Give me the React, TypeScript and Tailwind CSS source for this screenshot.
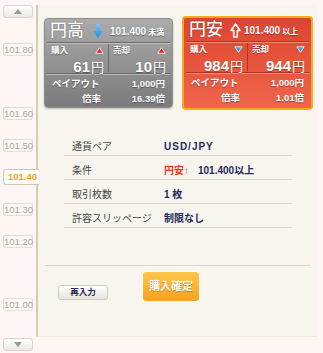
const font = "font-['Liberation_Sans','Noto_Sans_CJK_JP',sans-serif]";

const ScaleBox = ({ label, className }: { label: string; className?: string }) => (
  <div
    className={`h-[13px] w-[30px] rounded-[2px] border border-[#e3ddd6] bg-[#fcf9f6] text-[9.5px] leading-[11px] text-[#a9a6a2] text-center ${className ?? ''}`}>
    {label}
  </div>
);

const ArrowBtn = ({ up, className }: { up?: boolean; className?: string }) => (
  <div
    className={`h-[13px] w-[30px] rounded-[3px] border border-[#d8d4ce] bg-gradient-to-b from-white to-[#ece9e4] flex items-center justify-center ${className ?? ''}`}>
    <svg width="8" height="5" viewBox="0 0 8 5">
      <path d={up ? 'M0 5 L4 0 L8 5 Z' : 'M0 0 L4 5 L8 0 Z'} fill="#9a9894" />
    </svg>
  </div>
);

const Tri = ({ up }: { up?: boolean }) => (
  <svg width="9" height="7" viewBox="0 0 9 7">
    <path
      d={up ? 'M0.8 6.3 L4.5 0.8 L8.2 6.3 Z' : 'M0.8 0.8 L4.5 6.3 L8.2 0.8 Z'}
      fill={up ? '#e3261f' : '#2ea3ea'}
      stroke="#ffffff"
      strokeWidth="0.8"
      strokeLinejoin="round"
    />
  </svg>
);

const DownArrow = () => (
  <svg width="10" height="14" viewBox="0 0 10 14">
    <defs>
      <linearGradient id="bl" x1="0" y1="0" x2="0" y2="1">
        <stop offset="0" stopColor="#7cc8f7" />
        <stop offset="1" stopColor="#1a8fe0" />
      </linearGradient>
    </defs>
    <path d="M3 0 H7 V7 H10 L5 14 L0 7 H3 Z" fill="url(#bl)" />
  </svg>
);

const UpArrow = () => (
  <svg width="11" height="15" viewBox="0 0 11 15">
    <path
      d="M5.5 1 L10 7.5 H7.3 V14 H3.7 V7.5 H1 Z"
      fill="#e0402c"
      stroke="#ffffff"
      strokeWidth="1.6"
      strokeLinejoin="round"
    />
  </svg>
);

interface CardProps {
  title: string
  rate: string
  rateSuffix: string
  buy: string
  sell: string
  multiple: string
  red?: boolean
}

const Card = ({ title, rate, rateSuffix, buy, sell, multiple, red }: CardProps) => {
  const line = red
    ? 'border-t border-[#b8321f] shadow-[0_1px_0_rgba(255,180,160,0.6)]'
    : 'border-t border-[#6c6c6c] shadow-[0_1px_0_rgba(210,210,210,0.6)]';
  const vline = red ? 'border-l border-[#b8321f]' : 'border-l border-[#6c6c6c]';
  const shadow = '[text-shadow:0_1px_1px_rgba(0,0,0,0.35)]';
  return (
    <div
      className={`${font} ${shadow} text-white rounded-[4px] shrink-0 ${
        red
          ? 'w-[131px] h-[94px] -mt-[2px] border-2 border-[#f7a81b] bg-gradient-to-b from-[#dc4431] to-[#f0654b]'
          : 'w-[129px] h-[90px] border border-[#8d8d8d] bg-gradient-to-b from-[#ababab] to-[#7b7b7b] shadow-[0_1px_2px_rgba(0,0,0,0.25)]'
      }`}>
      <div className="h-[23px] flex items-center pl-[5px] whitespace-nowrap">
        <span className="text-[17px] font-medium leading-none [text-shadow:0_0_1px_rgba(0,0,0,0.6)]">{title}</span>
        <span className={red ? 'ml-[7px] mt-[1px]' : 'ml-[9px] mt-[1px]'}>{red ? <UpArrow /> : <DownArrow />}</span>
        <span className={`${red ? 'ml-[3px]' : 'ml-[7px]'} mt-[3px] text-[10px] font-bold leading-none`}>
          {rate}
          <span className="text-[8px] ml-[2px]">{rateSuffix}</span>
        </span>
      </div>
      <div className={`mx-[2px] ${line}`} />
      <div className="flex h-[30px] mx-[2px]">
        <div className="flex-1 flex flex-col px-[4px] pt-[3px]">
          <div className="flex justify-between items-center">
            <span className="text-[8.5px] font-bold leading-none">購入</span>
            <Tri up={!red} />
          </div>
          <div className="text-right leading-none mt-[4px]">
            <span className="text-[15px] font-bold">{buy}</span>
            <span className="text-[13px] ml-[1px]">円</span>
          </div>
        </div>
        <div className={`my-[1px] ${vline}`} />
        <div className="flex-1 flex flex-col px-[4px] pt-[3px]">
          <div className="flex justify-between items-center">
            <span className="text-[8.5px] font-bold leading-none">売却</span>
            <Tri up={!red} />
          </div>
          <div className="text-right leading-none mt-[4px]">
            <span className="text-[15px] font-bold">{sell}</span>
            <span className="text-[13px] ml-[1px]">円</span>
          </div>
        </div>
      </div>
      <div className={`mx-[2px] ${line}`} />
      <div className="px-[7px] pt-[2px] text-[9.5px] font-bold leading-[15px]">
        <div className="flex justify-between">
          <span>ペイアウト</span>
          <span>1,000円</span>
        </div>
        <div className="flex justify-between">
          <span className="ml-[30px]">倍率</span>
          <span>{multiple}</span>
        </div>
      </div>
    </div>
  );
};

const rows: { label: string; value: React.ReactNode }[] = [
  { label: '通貨ペア', value: <span className="tracking-[1px]">USD/JPY</span> },
  {
    label: '条件',
    value: (
      <>
        <span className="text-[#ec3a1c]">円安↑</span>
        <span className="ml-[9px]">101.400以上</span>
      </>
    ),
  },
  { label: '取引枚数', value: '1 枚' },
  { label: '許容スリッページ', value: '制限なし' },
];

export default function App() {
  return (
    <div className={`${font} w-[323px] h-[353px] bg-[#fdf6f4] flex overflow-hidden`}>
      <div className="w-[36px] shrink-0 flex flex-col pl-[3px] pt-[5px] relative z-10">
        <ArrowBtn up />
        <ScaleBox label="101.80" className="mt-[25px]" />
        <ScaleBox label="101.60" className="mt-[51px]" />
        <ScaleBox label="101.50" className="mt-[19px]" />
        <div className="mt-[17px] h-[16px] w-[36px] rounded-l-[3px] border border-r-0 border-[#cfc6b4] bg-[#fffdf8] text-[9.5px] font-bold leading-[14px] text-[#f5a01a] pl-[4px]">
          101.40
        </div>
        <ScaleBox label="101.30" className="mt-[18px]" />
        <ScaleBox label="101.20" className="mt-[19px]" />
        <ScaleBox label="101.00" className="mt-[50px]" />
        <ArrowBtn className="mt-[27px]" />
      </div>
      <div className="mt-[5px] h-[332px] w-[281px] shrink-0 border-l-2 border-[#d5cbb7] bg-[#f7f5ee] border-b border-b-[#efe9dc] flex flex-col pl-[6px] pt-[13px]">
        <div className="flex gap-[9px]">
          <Card title="円高" rate="101.400" rateSuffix="未満" buy="61" sell="10" multiple="16.39倍" />
          <Card title="円安" rate="101.400" rateSuffix="以上" buy="984" sell="944" multiple="1.01倍" red />
        </div>
        <div className="mt-[22px] ml-[20px] w-[228px] text-[10px]">
          {rows.map((r) => (
            <div key={r.label} className="h-[24px] pt-[6px] flex items-center border-b border-[#dcd7cb]">
              <span className="w-[100px] pl-[8px] text-[#444]">{r.label}</span>
              <span className="font-bold text-[#1e2a5c]">{r.value}</span>
            </div>
          ))}
        </div>
        <div className="mt-[37px] ml-[1px] mr-[7px] border-t border-[#dad5cb]" />
        <div className="flex items-start mt-[6px]">
          <button className="ml-[14px] mt-[13px] h-[15px] w-[50px] rounded-[3px] border border-[#cfcbc4] bg-gradient-to-b from-white to-[#e6e3de] text-[8.5px] font-bold leading-none text-[#1e2a5c]">
            再入力
          </button>
          <button className="ml-[35px] h-[29px] w-[56px] rounded-[3px] bg-gradient-to-b from-[#ffc64a] to-[#f7a21a] text-[11px] font-bold text-white [text-shadow:0_1px_1px_rgba(160,90,0,0.5)] shadow-[0_0_0_1px_rgba(255,255,255,0.7)]">
            購入確定
          </button>
        </div>
      </div>
    </div>
  );
}
